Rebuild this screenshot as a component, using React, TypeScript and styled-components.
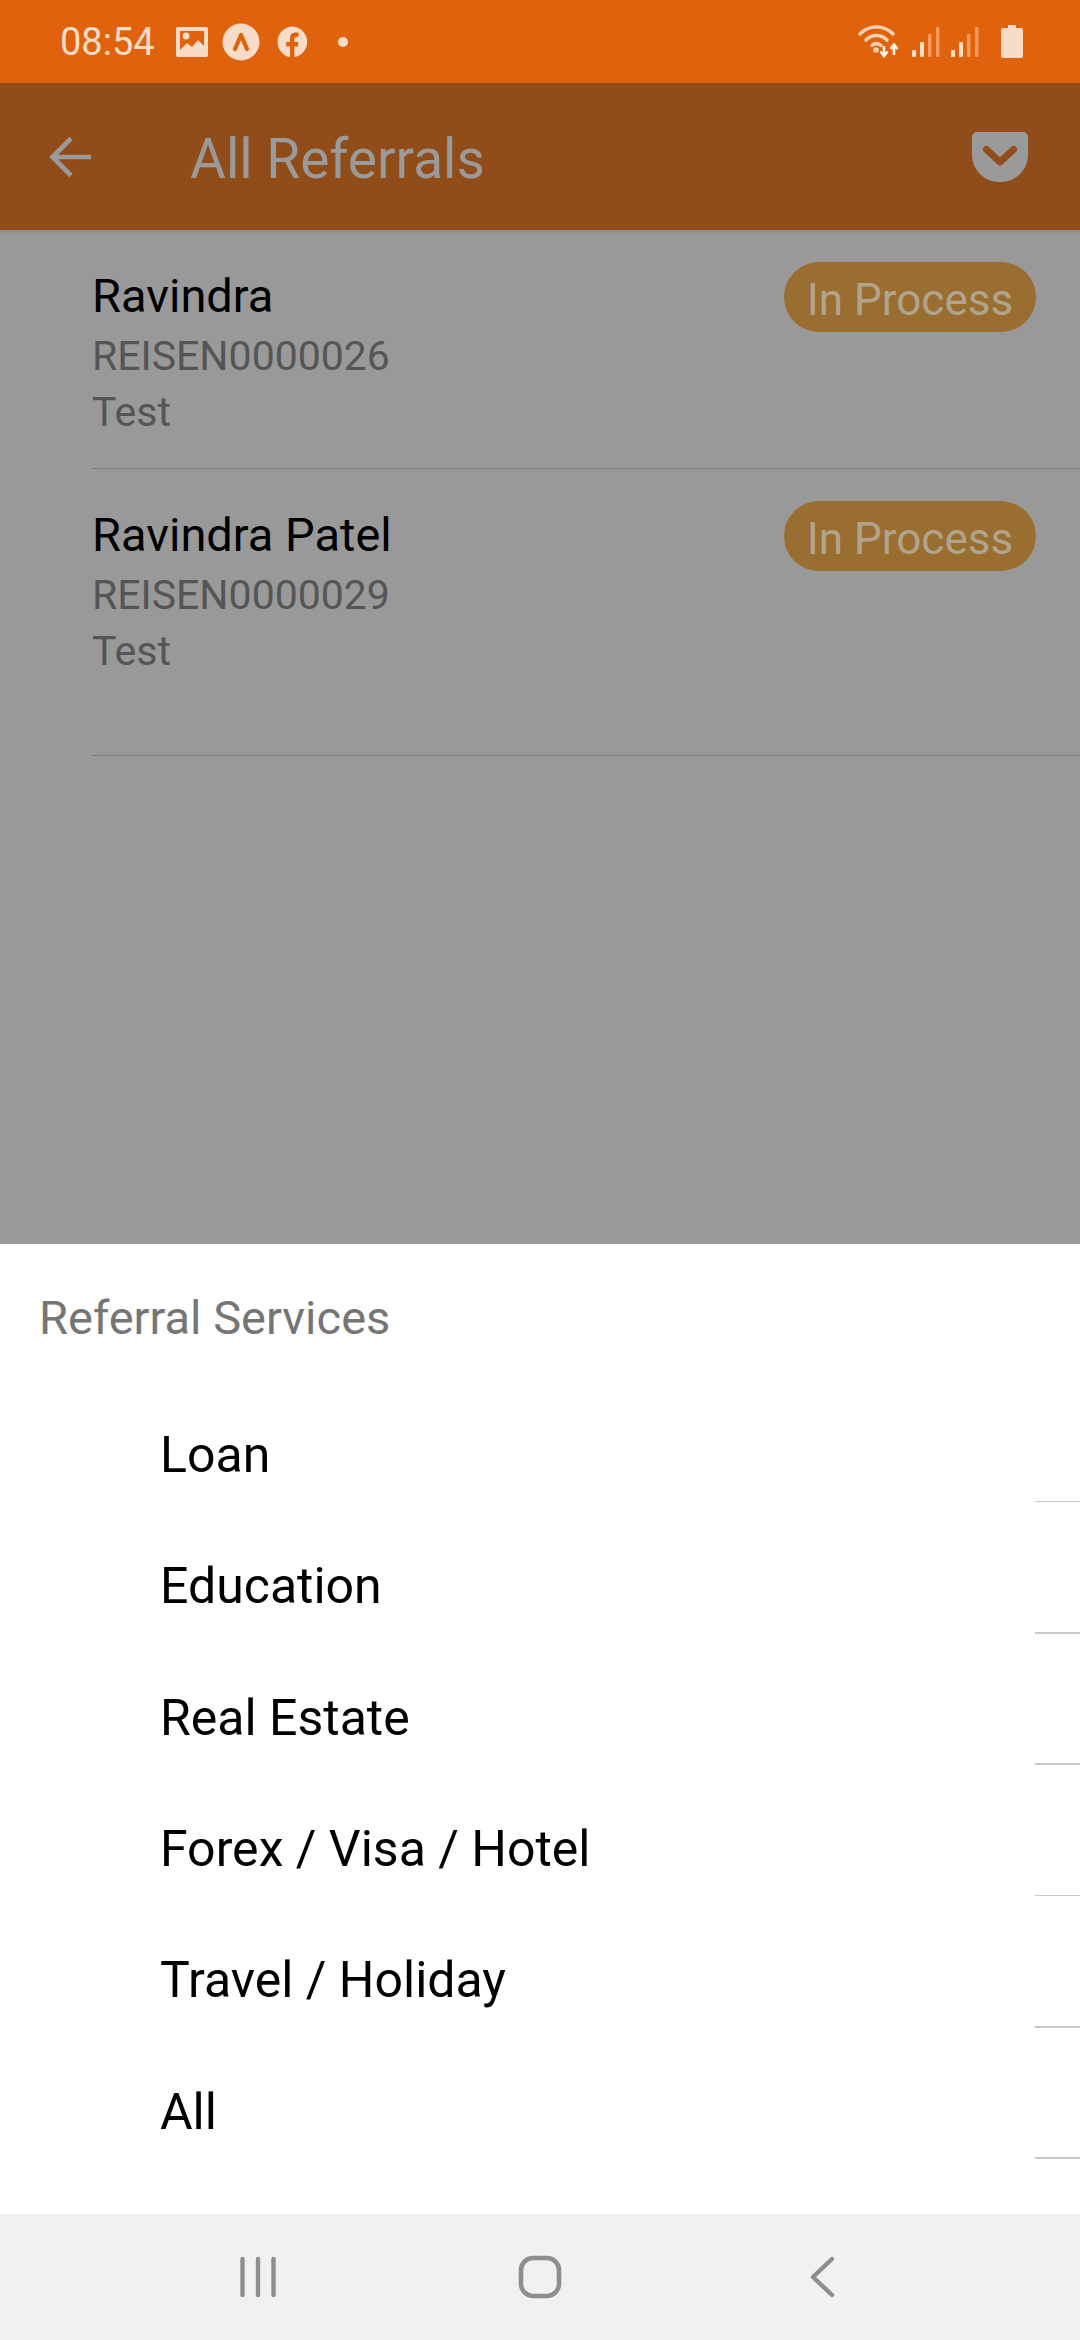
import React from 'react';
import styled, { createGlobalStyle } from 'styled-components';

const referrals = [
  { name: 'Ravindra', code: 'REISEN0000026', note: 'Test', height: 239 },
  { name: 'Ravindra Patel', code: 'REISEN0000029', note: 'Test', height: 287 },
];

const services = ['Loan', 'Education', 'Real Estate', 'Forex / Visa / Hotel', 'Travel / Holiday', 'All'];

const App: React.FC = () => {
  return (
    <Screen>
      <GlobalStyle />
      <StatusBar>
        <StatusLeft>
          <Clock>08:54</Clock>
          <svg width="32" height="30" viewBox="0 0 32 30" style={{ marginLeft: 21 }}>
            <path fill="#f9dcc8" fillRule="evenodd" d="M2 0h28a2 2 0 0 1 2 2v26a2 2 0 0 1-2 2H2a2 2 0 0 1-2-2V2a2 2 0 0 1 2-2zm2 4v19l7-7 5 4 6-7 6 6V4z" />
            <circle cx="10" cy="9" r="3.4" fill="#f9dcc8" />
          </svg>
          <svg width="38" height="38" viewBox="0 0 38 38" style={{ marginLeft: 14 }}>
            <circle cx="19" cy="19" r="18.5" fill="#f9dcc8" />
            <path d="M13 26l6-14 6 14" fill="none" stroke="#e0620d" strokeWidth="4.2" strokeLinecap="round" strokeLinejoin="round" />
          </svg>
          <svg width="32" height="32" viewBox="0 0 32 32" style={{ marginLeft: 17 }}>
            <path fill="#f9dcc8" d="M16 .5a15.5 15.5 0 0 0-3 30.7V20.5H9.200v-4.600H13v-3.400c0-3.800 2.200-5.900 5.700-5.900 1.300 0 2.800.2 2.800.2v3.900h-1.600c-1.900 0-2.500 1.200-2.500 2.400v2.800h4.100l-.7 4.600h-3.400v10.700A15.500 15.500 0 0 0 16 .5z" />
          </svg>
          <NoticeDot />
        </StatusLeft>
        <StatusRight>
          <svg width="43" height="33" viewBox="0 0 43 33">
            <g fill="none" stroke="#f9d2b4" strokeWidth="3.4" strokeLinecap="round">
              <path d="M2 9C11-.5 26-.5 35 9" />
              <path d="M8 15c6-6 15-6 21 0" />
              <path d="M14 20.500c3-2.500 6-2.500 9 0" />
            </g>
            <circle cx="18" cy="25" r="2.800" fill="#f9d2b4" />
            <path d="M26 21v9M22.500 26.500l3.500 4.500 3.500-4.500M36 30v-10M32.500 24l3.500-4.500 3.500 4.500" fill="none" stroke="#fff3ea" strokeWidth="2.600" />
          </svg>
          <SignalIcon />
          <SignalIcon />
          <svg width="22" height="33" viewBox="0 0 22 33" style={{ marginLeft: 22 }}>
            <path fill="#f9dcc8" d="M7 0h8v3h5a2 2 0 0 1 2 2v26a2 2 0 0 1-2 2H2a2 2 0 0 1-2-2V5a2 2 0 0 1 2-2h5z" />
          </svg>
        </StatusRight>
      </StatusBar>

      <Backdrop>
        <Toolbar>
          <svg width="44" height="42" viewBox="0 0 44 42" style={{ marginLeft: 49 }}>
            <path d="M42 21H4M22 2.500 3.500 21 22 39.500" fill="none" stroke="#9a9a9a" strokeWidth="4.600" />
          </svg>
          <Title>All Referrals</Title>
          <svg width="56" height="50" viewBox="0 0 56 50" style={{ marginRight: 52 }}>
            <path fill="#9a9a9a" d="M5 0h46a5 5 0 0 1 5 5v18a27 27 0 0 1-28 27A27 27 0 0 1 0 23V5a5 5 0 0 1 5-5z" />
            <path d="M14.500 17.500 28 30l13.500-12.500" fill="none" stroke="#914d19" strokeWidth="7" strokeLinecap="round" strokeLinejoin="round" />
          </svg>
        </Toolbar>
        <ReferralList>
          {referrals.map(item => (
            <ReferralRow key={item.code} $height={item.height}>
              <ReferralText>
                <ReferralName>{item.name}</ReferralName>
                <ReferralMeta>{item.code}</ReferralMeta>
                <ReferralMeta>{item.note}</ReferralMeta>
              </ReferralText>
              <StatusPill>In Process</StatusPill>
            </ReferralRow>
          ))}
        </ReferralList>
      </Backdrop>

      <Sheet>
        <SheetTitle>Referral Services</SheetTitle>
        {services.map(service => (
          <ServiceRow key={service}>{service}</ServiceRow>
        ))}
      </Sheet>

      <NavBar>
        <svg width="36" height="42" viewBox="0 0 36 42">
          <path d="M2.500 3v36M18 3v36M33.500 3v36" fill="none" stroke="#8e8e8e" strokeWidth="4.400" strokeLinecap="round" />
        </svg>
        <svg width="44" height="44" viewBox="0 0 44 44">
          <rect x="3" y="3" width="38" height="38" rx="12" fill="none" stroke="#8e8e8e" strokeWidth="4.600" />
        </svg>
        <svg width="26" height="42" viewBox="0 0 26 42">
          <path d="M23 3 4 21l19 18" fill="none" stroke="#8e8e8e" strokeWidth="4.400" strokeLinecap="round" strokeLinejoin="round" />
        </svg>
      </NavBar>
    </Screen>
  );
};

// two strong bars then two faint ones, same as the device status icon
const SignalIcon: React.FC = () => (
  <SignalSvg width="28" height="30" viewBox="0 0 28 30">
    <rect x="0" y="23" width="4" height="7" rx="1" fill="#fbdcc4" />
    <rect x="8" y="15" width="4" height="15" rx="1" fill="#fbdcc4" />
    <rect x="16" y="7" width="3.500" height="23" rx="1" fill="#f39a5c" />
    <rect x="24" y="0" width="3.500" height="30" rx="1" fill="#f39a5c" />
  </SignalSvg>
);

const GlobalStyle = createGlobalStyle`
  html, body {
    margin: 0;
    padding: 0;
    background: #fff;
  }
  body {
    font-family: 'Roboto', 'Liberation Sans', sans-serif;
  }
  svg {
    display: block;
    flex-shrink: 0;
  }
`;

const Screen = styled.div`
  width: 1080px;
  height: 2340px;
  display: flex;
  flex-direction: column;
  overflow: hidden;
`;

const StatusBar = styled.div`
  height: 83px;
  background: #e0620d;
  display: flex;
  align-items: center;
  justify-content: space-between;
  padding: 0 57px 0 60px;
`;

const StatusLeft = styled.div`
  display: flex;
  align-items: center;
`;

const StatusRight = styled.div`
  display: flex;
  align-items: center;
`;

const Clock = styled.span`
  font-size: 38px;
  color: #fbdcc4;
  width: 95px;
  white-space: nowrap;
`;

const NoticeDot = styled.span`
  width: 10px;
  height: 10px;
  border-radius: 50%;
  background: #f9dcc8;
  margin-left: 29px;
`;

const SignalSvg = styled.svg`
  margin-left: 11px;
`;

const Backdrop = styled.div`
  height: 1161px;
  background: #999999;
  display: flex;
  flex-direction: column;
`;

const Toolbar = styled.div`
  height: 147px;
  background: #914d19;
  display: flex;
  align-items: center;
  box-shadow: 0 2px 3px rgba(0, 0, 0, 0.12);
`;

const Title = styled.h1`
  flex: 1;
  margin: 4px 0 0 97px;
  font-size: 55px;
  font-weight: 400;
  color: #9a9a9a;
`;

const ReferralList = styled.div`
  padding-left: 92px;
`;

const ReferralRow = styled.div<{ $height: number }>`
  height: ${p => p.$height}px;
  box-sizing: border-box;
  border-bottom: 1.5px solid #7c7c7c;
  display: flex;
  justify-content: space-between;
  align-items: flex-start;
  padding: 33px 44px 0 0;
`;

const ReferralText = styled.div`
  display: flex;
  flex-direction: column;
`;

const ReferralName = styled.div`
  font-size: 47px;
  line-height: 65px;
  color: #000;
`;

const ReferralMeta = styled.div`
  font-size: 41px;
  line-height: 56px;
  color: #555;
`;

const StatusPill = styled.span`
  height: 70px;
  width: 252px;
  margin-top: -1px;
  border-radius: 35px;
  background: #9a6e30;
  color: #b0a48f;
  font-size: 44px;
  padding-top: 5px;
  box-sizing: border-box;
  display: flex;
  align-items: center;
  justify-content: center;
`;

const Sheet = styled.div`
  height: 970px;
  background: #fff;
  display: flex;
  flex-direction: column;
`;

const SheetTitle = styled.div`
  height: 127px;
  padding: 40px 0 0 39px;
  box-sizing: border-box;
  font-size: 47px;
  line-height: 68px;
  color: #757575;
`;

const ServiceRow = styled.div`
  position: relative;
  height: 131.330px;
  box-sizing: border-box;
  padding: 52px 0 0 160px;
  font-size: 50px;
  line-height: 64px;
  color: #000;
  &::after {
    content: '';
    position: absolute;
    right: 0;
    bottom: 0;
    width: 45px;
    height: 1.500px;
    background: #c8c8c8;
  }
`;

const NavBar = styled.div`
  height: 126px;
  background: #f1f1f1;
  display: grid;
  grid-template-columns: 278px 291px 26px;
  justify-content: start;
  align-items: center;
  padding-left: 240px;
`;

export default App;
